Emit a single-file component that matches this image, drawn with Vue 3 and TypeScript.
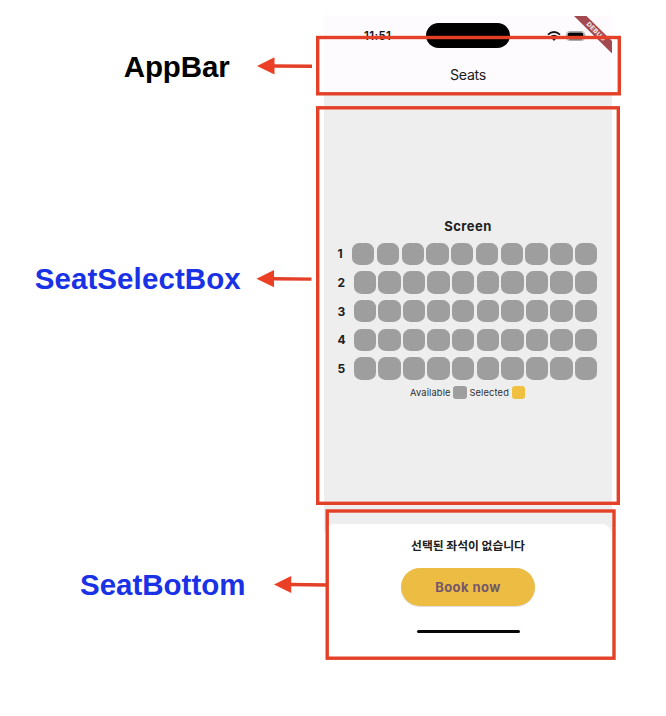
<script setup lang="ts">
interface SeatRow {
  label: number
  first: boolean
}

interface Callout {
  name: string
  tone: 'black' | 'blue'
  x: number
  y: number
  length: number
  box: { x: number; y: number; w: number; h: number }
  head: string
  line: { x1: number; y1: number; x2: number; y2: number }
}

const rows: SeatRow[] = [1, 2, 3, 4, 5].map((n) => ({ label: n, first: n === 1 }))

const callouts: Callout[] = [
  {
    name: 'AppBar', tone: 'black', x: 123.7, y: 76.7, length: 106,
    box: { x: 317.7, y: 37.5, w: 301.6, h: 56.3 },
    head: '257,66 274.5,57.3 274.5,74.5',
    line: { x1: 273, y1: 66, x2: 312, y2: 66.3 },
  },
  {
    name: 'SeatSelectBox', tone: 'blue', x: 34.7, y: 289, length: 206,
    box: { x: 317.7, y: 107.8, w: 300.6, h: 395.5 },
    head: '256.5,278.7 274,270 274,287.3',
    line: { x1: 273, y1: 278.7, x2: 311.5, y2: 279.1 },
  },
  {
    name: 'SeatBottom', tone: 'blue', x: 80, y: 595, length: 165.5,
    box: { x: 327.2, y: 511, w: 286.8, h: 147.2 },
    head: '274,584.5 291.2,576 291.2,593',
    line: { x1: 290, y1: 584.5, x2: 327, y2: 585 },
  },
]
</script>

<template>
  <main class="page">
    <section class="phone">
      <header class="top">
        <div class="status">
          <span class="clock">11:51</span>
          <span class="island"></span>
          <span class="signals">
            <svg class="wifi" width="14" height="10" viewBox="0 0 14 10">
              <g fill="none" stroke="#111" stroke-width="1.9">
                <path d="M1 3.6Q7-1.6 13 3.6" />
                <path d="M3.5 6.3Q7 3.2 10.5 6.3" />
              </g>
              <path d="M5 7.8Q7 6.3 9 7.8L7 10Z" fill="#111" />
            </svg>
            <svg class="battery" width="21" height="10" viewBox="0 0 21 10">
              <rect x="0.5" y="0.5" width="18" height="9" rx="2.8" fill="none" stroke="#aaa" />
              <rect x="1.6" y="1.5" width="15.8" height="7" rx="1.8" fill="#050505" />
              <path d="M19.4 3.5Q21 5 19.4 6.5Z" fill="#aaa" />
            </svg>
          </span>
        </div>
        <h1 class="title">Seats</h1>
        <svg class="ribbon" width="40" height="40" viewBox="0 0 40 40">
          <path d="M2 1H14.5L40 26V38.5Z" fill="#a34a50" />
          <text transform="translate(24 16.4) rotate(45)" text-anchor="middle" y="2.2" textLength="24">DEBUG</text>
        </svg>
      </header>

      <div class="seats">
        <h2 class="screen">Screen</h2>
        <div class="grid">
          <div v-for="row in rows" :key="row.label" class="row" :class="{ first: row.first }">
            <span class="number">{{ row.label }}</span>
            <div class="cells">
              <i v-for="n in 10" :key="n" class="seat"></i>
            </div>
          </div>
        </div>
        <div class="legend">
          <span class="available">Available</span><i class="swatch"></i>
          <span class="selected">Selected</span><i class="swatch gold"></i>
        </div>
      </div>

      <footer class="sheet">
        <p class="message">선택된 좌석이 없습니다</p>
        <button class="book" type="button">Book now</button>
        <span class="home"></span>
      </footer>
    </section>

    <svg class="callouts" width="666" height="716" viewBox="0 0 666 716">
      <g v-for="c in callouts" :key="c.name">
        <rect :x="c.box.x" :y="c.box.y" :width="c.box.w" :height="c.box.h" class="frame" />
        <line :x1="c.line.x1" :y1="c.line.y1" :x2="c.line.x2" :y2="c.line.y2" class="frame" />
        <polygon :points="c.head" class="head" />
        <text :x="c.x" :y="c.y" :textLength="c.length" class="name" :class="c.tone">{{ c.name }}</text>
      </g>
    </svg>
  </main>
</template>

<style>
body {
  margin: 0;
  background: #fff;
}
</style>

<style scoped>
.page {
  position: relative;
  box-sizing: border-box;
  width: 666px;
  height: 716px;
  padding: 15px 0 0 324px;
  overflow: hidden;
  background: #fff;
  font-family: Inter, "Noto Sans CJK KR", sans-serif;
  color: #202020;
}
.phone {
  display: flex;
  flex-direction: column;
  width: 288px;
  height: 645px;
  background: #eee;
}
.top {
  position: relative;
  height: 80px;
  flex: none;
  background: #fefbff;
}
.status {
  display: flex;
  height: 41px;
  align-items: center;
}
.clock {
  width: 62px;
  padding-left: 40px;
  font-size: 11.5px;
  font-weight: 600;
  line-height: 14px;
  letter-spacing: 0.35px;
  color: #111;
}
.island {
  width: 84px;
  height: 25px;
  border-radius: 13px;
  background: #000;
}
.signals {
  display: flex;
  align-items: center;
  gap: 5px;
  padding-left: 37px;
}
.title {
  margin: 10px 0 0;
  font-size: 14.2px;
  font-weight: 400;
  line-height: 17px;
  letter-spacing: -0.3px;
  text-align: center;
}
.ribbon {
  position: absolute;
  top: 0;
  right: 0;
}
.ribbon text {
  fill: #f5e5e5;
  font-size: 6.5px;
  font-weight: 800;
}
.seats {
  height: 429px;
  flex: none;
  padding-top: 122px;
  box-sizing: border-box;
}
.screen {
  margin: 0;
  font-size: 13px;
  font-weight: 700;
  line-height: 18px;
  letter-spacing: 0.5px;
  text-align: center;
}
.grid {
  display: flex;
  flex-direction: column;
  gap: 6.3px;
  padding: 7.6px 14.5px 0 13.6px;
}
.row {
  display: flex;
  align-items: center;
  justify-content: space-between;
  height: 22.4px;
}
.number {
  font-size: 12px;
  font-weight: 700;
}
.cells {
  display: flex;
  justify-content: space-between;
  width: 243.8px;
}
.first .cells {
  width: 245.6px;
}
.seat {
  width: 22.4px;
  height: 22.4px;
  border-radius: 7.3px;
  background: #9e9e9e;
}
.legend {
  display: flex;
  align-items: center;
  height: 14px;
  margin-top: 5.8px;
  padding-left: 86px;
  font-size: 9.3px;
  color: #303030;
}
.available {
  width: 43.3px;
  letter-spacing: 0.15px;
}
.selected {
  width: 42.3px;
  padding-left: 2.5px;
  letter-spacing: 0.15px;
}
.swatch {
  width: 13.6px;
  height: 13.6px;
  border-radius: 3px;
  background: #9e9e9e;
}
.gold {
  background: #f2c040;
}
.sheet {
  display: flex;
  flex: 1;
  flex-direction: column;
  align-items: center;
  border-radius: 11px 11px 0 0;
  background: #fff;
}
.message {
  margin: 12px 0 0;
  font-family: "Noto Sans CJK KR", sans-serif;
  font-size: 11.8px;
  font-weight: 600;
  line-height: 18px;
  white-space: nowrap;
}
.book {
  width: 134px;
  height: 37.5px;
  margin-top: 14.2px;
  padding: 0;
  border: 0;
  border-radius: 19px;
  background: #ecbc43;
  box-shadow: 0 1px 1px #ddd;
  color: #75576a;
  font-family: Inter, sans-serif;
  font-size: 13px;
  font-weight: 700;
  letter-spacing: 0.45px;
}
.home {
  width: 103px;
  height: 3.5px;
  margin-top: 24.3px;
  border-radius: 2px;
  background: #080808;
}
.callouts {
  position: absolute;
  inset: 0;
  pointer-events: none;
}
.frame {
  fill: none;
  stroke: #e34027;
  stroke-width: 3.4;
}
.head {
  fill: #eb4026;
}
.name {
  font-family: "Liberation Sans", sans-serif;
  font-size: 29.5px;
  font-weight: 700;
}
.black {
  fill: #000;
}
.blue {
  fill: #1932e6;
}
</style>
